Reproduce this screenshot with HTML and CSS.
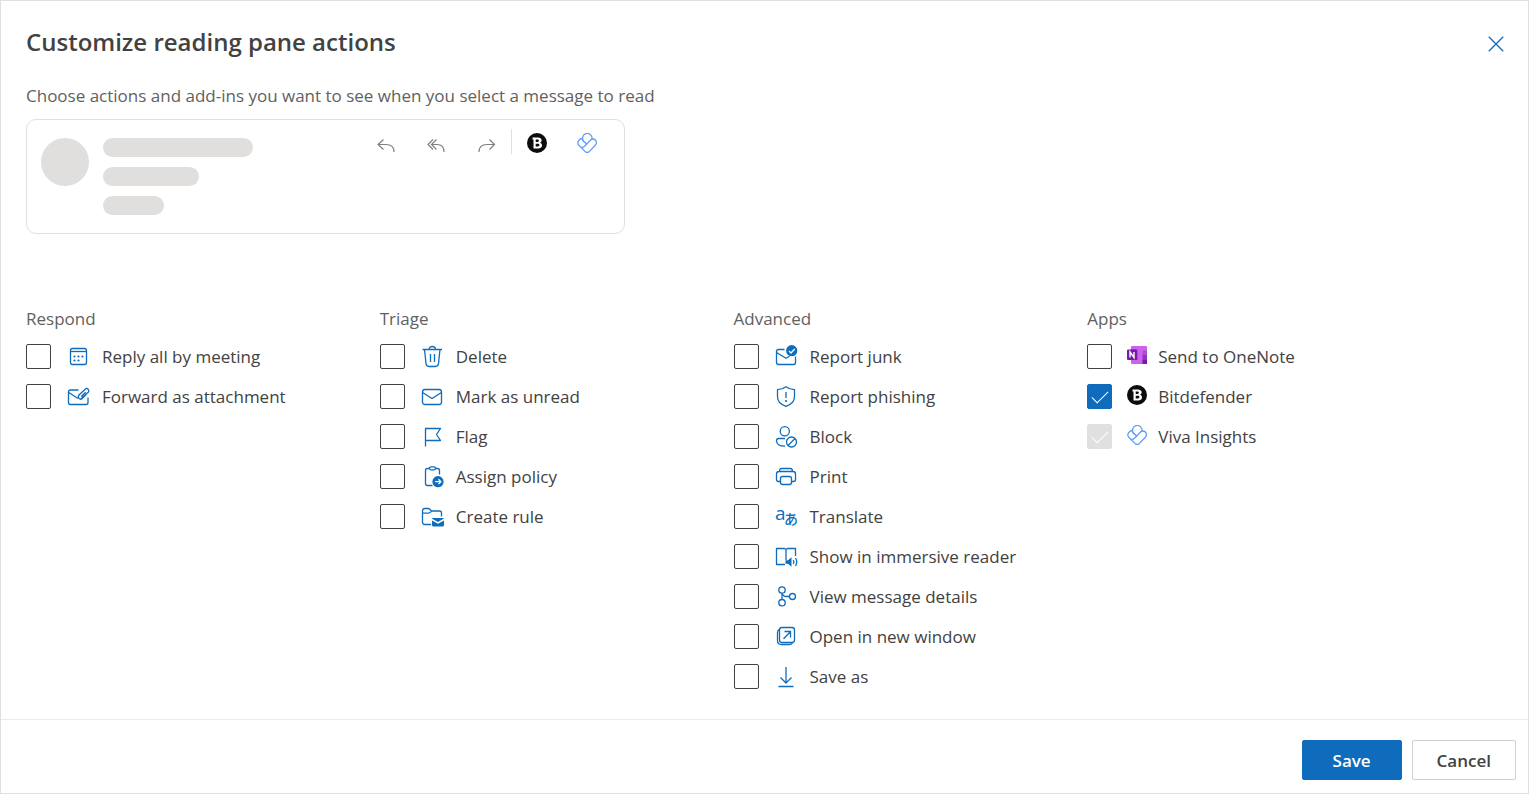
FILE: index.html
```html
<!DOCTYPE html>
<html lang="en">
<head>
    <meta charset="UTF-8">
    <meta name="viewport" content="width=device-width, initial-scale=1.0">
    <title>Customize reading pane actions</title>
    <link rel="stylesheet" href="styles.css">
</head>
<body>
    <!-- Shared app logos -->
    <svg class="symbols" aria-hidden="true">
        <symbol id="bitdefender" viewBox="0 0 20 20">
            <circle cx="10" cy="10" r="10" fill="#0d0c0b"/>
            <path d="M5.500 4.500H11C15.300 4.500 15.600 8.800 13 9.700C16.200 10.500 15.600 15.500 11.300 15.500H6.500V6.500H5.500Z" fill="#fff"/>
            <path d="M8.700 6.600H10.700C12.300 6.600 12.300 8.900 10.700 8.900H8.700ZM8.700 10.800H11C12.900 10.800 12.900 13.400 11 13.400H8.700Z" fill="#0d0c0b"/>
        </symbol>
        <symbol id="viva" viewBox="0 0 20 20">
            <g fill="none" stroke="#639cf6" stroke-width="1.300" stroke-linecap="round" stroke-linejoin="round">
                <path d="M6.900 8.700A4.800 4.800 0 1 1 15 6.200"/>
                <path d="M5.700 5.500C2.500 5.500 -.6 9 1.600 12L8 18.400Q10.200 20.400 12.400 18.400L18.300 12.300C20.600 9.500 18.800 5.900 15.900 6Q14.400 6 13.300 7.200L7.500 13.200Q5.300 15.300 3.300 13.700"/>
                <path d="M5.700 7.300L9.600 11"/>
            </g>
        </symbol>
    </svg>

    <main class="dialog">
        <div class="content">
            <header class="header">
                <h1>Customize reading pane actions</h1>
                <button class="close" aria-label="Close">
                    <svg width="16" height="16" viewBox="0 0 16 16"><path d="M.8.8L15.200 15.200M15.200.8L.8 15.200"/></svg>
                </button>
            </header>

            <p class="description">Choose actions and add-ins you want to see when you select a message to read</p>

            <div class="preview">
                <div class="avatar"></div>
                <div class="lines">
                    <div class="line long"></div>
                    <div class="line medium"></div>
                    <div class="line short"></div>
                </div>
                <div class="toolbar">
                    <svg class="arrow" viewBox="0 0 50 28"><path d="M22.500 10.500L17 15.500L22.500 20.500M17 15.500H25Q33 15.500 33 23"/></svg>
                    <svg class="arrow" viewBox="0 0 50 28"><path d="M22 10.500L17 15.500L22 20.500M25.500 10.500L20.500 15.500L25.500 20.500M20.500 15.500H26Q33 15.500 33 23"/></svg>
                    <svg class="arrow" viewBox="0 0 50 28"><path d="M28.500 10.500L33.500 15.500L28.500 20.500M33.500 15.500H26Q18 15.500 18 23"/></svg>
                    <div class="divider"></div>
                    <svg viewBox="0 0 50 28"><use href="#bitdefender" x="15" y="4" width="20" height="20"/></svg>
                    <svg viewBox="0 0 50 28"><use href="#viva" x="15" y="4" width="20" height="20"/></svg>
                </div>
            </div>

            <div class="groups">
                <section class="group">
                    <h2>Respond</h2>
                    <label class="option">
                        <input type="checkbox">
                        <svg class="icon" viewBox="0 0 25 25"><rect x="4.500" y="4.500" width="16" height="16" rx="2"/><path d="M4.500 7.500H20.500"/><path class="dots" d="M8.500 12.500h0M12.500 12.500h0M16.500 12.500h0M8.500 16.500h0M12.500 16.500h0"/></svg>
                        <span>Reply all by meeting</span>
                    </label>
                    <label class="option">
                        <input type="checkbox">
                        <svg class="icon" viewBox="0 0 25 25"><path d="M12.500 6H4.500Q2.500 6 2.500 8V18.500Q2.500 20.500 4.500 20.500H20Q22 20.500 22 18.500V13.500M2.800 8.500L12 14.500"/><path d="M15 14.800L22.200 8.300C24 6.300 21.600 3.600 19.500 5L13.200 10.800C10.800 13.500 14 16.500 16.200 14.500L20.300 10.300M15.300 12.500L19.700 8.200"/></svg>
                        <span>Forward as attachment</span>
                    </label>
                </section>

                <section class="group">
                    <h2>Triage</h2>
                    <label class="option">
                        <input type="checkbox">
                        <svg class="icon" viewBox="0 0 25 25"><path d="M2.500 5.500H22M9 5.500C9 1.500 15.500 1.500 15.500 5.500M4.500 5.500L6 19.500Q6.300 22.500 9 22.500H15.500Q18.200 22.500 18.500 19.500L20 5.500M10.500 10V18M14.500 10V18"/></svg>
                        <span>Delete</span>
                    </label>
                    <label class="option">
                        <input type="checkbox">
                        <svg class="icon" viewBox="0 0 25 25"><rect x="2.500" y="5.500" width="19" height="15" rx="2.500"/><path d="M2.500 8.500L12 14.500L21.500 8.500"/></svg>
                        <span>Mark as unread</span>
                    </label>
                    <label class="option">
                        <input type="checkbox">
                        <svg class="icon" viewBox="0 0 25 25"><path d="M5.500 22.500V4.500H20.500L16.500 10.500L20.500 16.500H5.500"/></svg>
                        <span>Flag</span>
                    </label>
                    <label class="option">
                        <input type="checkbox">
                        <svg class="icon" viewBox="0 0 25 25"><path d="M9.500 4.500H7.500Q5.500 4.500 5.500 6.500V19.500Q5.500 21.500 7.500 21.500H12.500M15.500 4.500H17.500Q19.500 4.500 19.500 6.500V10.500"/><rect x="9.500" y="2.800" width="6" height="3" rx="1.500"/><circle class="solid" cx="18" cy="17.700" r="5.600"/><path class="mark" d="M15.200 17.700H20.700M18.500 15.300L20.900 17.700L18.500 20.100"/></svg>
                        <span>Assign policy</span>
                    </label>
                    <label class="option">
                        <input type="checkbox">
                        <svg class="icon" viewBox="0 0 25 25"><path d="M11 20.500H4.800Q2.500 20.500 2.500 18V7Q2.500 4.500 4.800 4.500H8.200Q9 4.500 9.800 5.300L11.500 7H19.500Q21.500 7 21.500 9V12.500M2.500 9.200H8.200Q9.200 9.200 10 8.400L11.500 7"/><path class="fill" d="M12 14.300Q12 14 13 14H23Q24 14 24 14.500L18 18L12 14.700ZM12 16.500L18 19.800L24 16.500V21Q24 22.500 22.500 22.500H13.500Q12 22.500 12 21Z"/></svg>
                        <span>Create rule</span>
                    </label>
                </section>

                <section class="group">
                    <h2>Advanced</h2>
                    <label class="option">
                        <input type="checkbox">
                        <svg class="icon" viewBox="0 0 25 25"><path d="M10.500 5.500H4.500Q2.500 5.500 2.500 7.500V18.500Q2.500 20.500 4.500 20.500H19.500Q21.500 20.500 21.500 18.500V12.500M2.500 8.500L12 14.300L15.500 12.200"/><circle class="solid" cx="17.700" cy="6.700" r="5.600"/><path class="mark" d="M15 7L17 9L20.700 5"/></svg>
                        <span>Report junk</span>
                    </label>
                    <label class="option">
                        <input type="checkbox">
                        <svg class="icon" viewBox="0 0 25 25"><path d="M12 2.800Q15.500 5.500 20.500 5.700V12.500C20.500 17.500 17.500 20.500 12 22.300C6.500 20.500 3.500 17.500 3.500 12.500V5.700Q8.500 5.500 12 2.800ZM12 8V14"/><path class="dots" d="M12 17h0"/></svg>
                        <span>Report phishing</span>
                    </label>
                    <label class="option">
                        <input type="checkbox">
                        <svg class="icon" viewBox="0 0 25 25"><circle cx="10.800" cy="7.200" r="4.600"/><path d="M11 14.500H4.700Q2.500 14.500 2.500 16.700C2.500 20.500 6 22.200 11.200 22.200"/><circle cx="17.500" cy="18" r="5"/><path d="M14 21.500L21 14.500"/></svg>
                        <span>Block</span>
                    </label>
                    <label class="option">
                        <input type="checkbox">
                        <svg class="icon" viewBox="0 0 25 25"><path d="M6.500 17.500H4.500Q2.500 17.500 2.500 15.500V10Q2.500 7.500 5 7.500H19Q21.500 7.500 21.500 10V15.500Q21.500 17.500 19.500 17.500H17.500M5.500 7.500Q5.500 4.500 7.500 4.500H16.500Q18.500 4.500 18.500 7.500"/><rect x="6.500" y="12.500" width="11" height="8" rx="2"/></svg>
                        <span>Print</span>
                    </label>
                    <label class="option">
                        <input type="checkbox">
                        <svg class="icon" viewBox="0 0 25 25" aria-hidden="true"><text class="latin" x="1" y="16">a</text><text class="kana" x="10" y="20">あ</text></svg>
                        <span>Translate</span>
                    </label>
                    <label class="option">
                        <input type="checkbox">
                        <svg class="icon" viewBox="0 0 25 25"><path d="M11 20.500H2.500V4.500H10.500L12 5.500L13.500 4.500H21.500V12M12 5.500V16"/><path class="fill" d="M11.500 16.300H14L17.500 13.300V22.700L14 19.800H11.500Z"/><path d="M19.300 16Q20.500 18 19.300 20M21.500 14Q24 18 21.500 22"/></svg>
                        <span>Show in immersive reader</span>
                    </label>
                    <label class="option">
                        <input type="checkbox">
                        <svg class="icon" viewBox="0 0 25 25"><circle cx="8" cy="6" r="3.200"/><circle cx="8" cy="18.700" r="3.200"/><circle cx="18.500" cy="12.500" r="3"/><path d="M8 9.200V15.500M8 9.200Q9.200 12.500 12.500 12.500H15.500"/></svg>
                        <span>View message details</span>
                    </label>
                    <label class="option">
                        <input type="checkbox">
                        <svg class="icon" viewBox="0 0 25 25"><rect x="5.500" y="3.500" width="15" height="15" rx="2.500"/><path d="M5.500 5.500Q3.500 6 3.500 8.500V16.500Q3.500 20.500 7.500 20.500H15.500Q18 20.500 18.500 18.500M9.500 14.800L16.500 7.800M10.500 7.500H16.500V13.500"/></svg>
                        <span>Open in new window</span>
                    </label>
                    <label class="option">
                        <input type="checkbox">
                        <svg class="icon" viewBox="0 0 25 25"><path d="M12 3V19M6.500 13.500L12 19L17.500 13.500M4.500 22.500H19.500"/></svg>
                        <span>Save as</span>
                    </label>
                </section>

                <section class="group">
                    <h2>Apps</h2>
                    <label class="option">
                        <input type="checkbox">
                        <svg class="logo" viewBox="0 0 20 25"><rect x="4" y="2" width="16" height="18" rx="1" fill="#ca64ea"/><path d="M15.500 6.500H20V11H15.500Z" fill="#ae4bd5"/><path d="M15.500 11H20V15.500H15.500Z" fill="#9332bf"/><path d="M15.500 15.500H20V20H15.500Z" fill="#7719aa"/><path d="M4 5.500H10.500V16H4Z" fill="#9a3bbd"/><rect y="5.500" width="10" height="10.500" rx="1" fill="#7719aa"/><path d="M3 13.500V8L7 13.500V8" fill="none" stroke="#fff" stroke-width="1.400"/></svg>
                        <span>Send to OneNote</span>
                    </label>
                    <label class="option">
                        <input type="checkbox" checked>
                        <svg class="logo" viewBox="0 0 20 25"><use href="#bitdefender" y="1" width="20" height="20"/></svg>
                        <span>Bitdefender</span>
                    </label>
                    <label class="option">
                        <input type="checkbox" checked disabled>
                        <svg class="logo" viewBox="0 0 20 25"><use href="#viva" y="1" width="20" height="20"/></svg>
                        <span>Viva Insights</span>
                    </label>
                </section>
            </div>
        </div>

        <footer class="footer">
            <button class="btn primary">Save</button>
            <button class="btn">Cancel</button>
        </footer>
    </main>
</body>
</html>
```

FILE: styles.css
```css
* {
    box-sizing: border-box;
}

body {
    margin: 0;
    font-family: "Segoe UI", "Open Sans", "Noto Sans", sans-serif;
    font-size: 17px;
    line-height: 24px;
    color: #424242;
    background-color: #fff;
}

h1, h2, p {
    margin: 0;
}

.symbols {
    position: absolute;
    width: 0;
    height: 0;
}

.dialog {
    display: flex;
    flex-direction: column;
    min-height: 100vh;
    border: 1px solid #e0e0e0;
}

.content {
    flex: 1;
    padding: 24px 25px;
}

.header {
    display: flex;
    justify-content: space-between;
    align-items: flex-start;
}

h1 {
    font-size: 24px;
    font-weight: 600;
    line-height: 34px;
}

.close {
    display: flex;
    padding: 11px 8px 8px;
    margin-right: -9px;
    border: none;
    background: none;
    cursor: pointer;
}

.close svg {
    fill: none;
    stroke: #0f6cbd;
    stroke-width: 1.300;
}

.description {
    margin-top: 24px;
    color: #616161;
}

/* Message preview */
.preview {
    display: flex;
    max-width: 599px;
    min-height: 115px;
    margin-top: 11px;
    padding: 9px 12px 18px 14px;
    border: 1px solid #e0e0e0;
    border-radius: 10px;
}

.avatar {
    width: 48px;
    height: 48px;
    margin-top: 9px;
    border-radius: 50%;
    background-color: #e1dfdd;
}

.lines {
    display: flex;
    flex-direction: column;
    gap: 10px;
    margin: 9px 0 0 14px;
}

.line {
    height: 19px;
    border-radius: 10px;
    background-color: #e1dfdd;
}

.long {
    width: 150px;
}

.medium {
    width: 96px;
}

.short {
    width: 61px;
}

.toolbar {
    display: flex;
    margin-left: auto;
}

.toolbar svg {
    width: 50px;
    height: 28px;
}

.arrow {
    fill: none;
    stroke: #808080;
    stroke-width: 1.200;
}

.divider {
    width: 1px;
    height: 25px;
    background-color: #e0e0e0;
}

/* Action lists */
.groups {
    display: grid;
    grid-template-columns: repeat(4, 1fr);
    margin-top: 73px;
    padding-right: 62px;
}

.group {
    display: flex;
    flex-direction: column;
    align-items: flex-start;
    gap: 15px;
}

h2 {
    font-size: 17px;
    font-weight: 400;
    line-height: 24px;
    margin-bottom: -2px;
    color: #616161;
}

.option {
    display: flex;
    align-items: center;
    height: 25px;
    cursor: pointer;
}

.option input {
    appearance: none;
    width: 25px;
    height: 25px;
    margin: 0 15px 0 0;
    border: 1px solid #424242;
    border-radius: 2px;
    background: #fff;
}

.option input:checked {
    display: grid;
    place-items: center;
    border-color: #0f6cbd;
    background-color: #0f6cbd;
}

.option input:checked::before {
    content: "";
    width: 15px;
    height: 7px;
    margin-bottom: 4px;
    border: solid #fff;
    border-width: 0 0 1px 1px;
    transform: rotate(-45deg);
}

.option input:disabled {
    border-color: #e0e0e0;
    background-color: #e0e0e0;
}

.icon {
    width: 25px;
    height: 25px;
    margin-right: 11px;
    overflow: visible;
    fill: none;
    stroke: #0f6cbd;
    stroke-width: 1.300;
    stroke-linejoin: round;
}

.icon .dots {
    stroke-width: 2.200;
    stroke-linecap: round;
}

.icon .solid,
.icon .fill {
    fill: #0f6cbd;
    stroke: none;
}

.icon .mark {
    stroke: #fff;
}

.icon text {
    fill: #0f6cbd;
    stroke: none;
}

.latin {
    font-size: 19px;
}

.kana {
    font-family: "Noto Sans CJK JP", sans-serif;
    font-size: 14px;
    font-weight: 500;
}

.logo {
    width: 20px;
    height: 25px;
    margin-right: 11px;
}

/* Footer */
.footer {
    display: flex;
    justify-content: flex-end;
    gap: 10px;
    padding: 20px 12px 13px;
    border-top: 1px solid #ebebeb;
}

.btn {
    min-width: 100px;
    height: 40px;
    padding: 0 24px;
    border: 1px solid #d1d1d1;
    border-radius: 2px;
    font-family: inherit;
    font-size: 17px;
    font-weight: 600;
    color: #424242;
    background-color: #fff;
    cursor: pointer;
}

.primary {
    border-color: #0f6cbd;
    color: #fff;
    background-color: #0f6cbd;
}
```
